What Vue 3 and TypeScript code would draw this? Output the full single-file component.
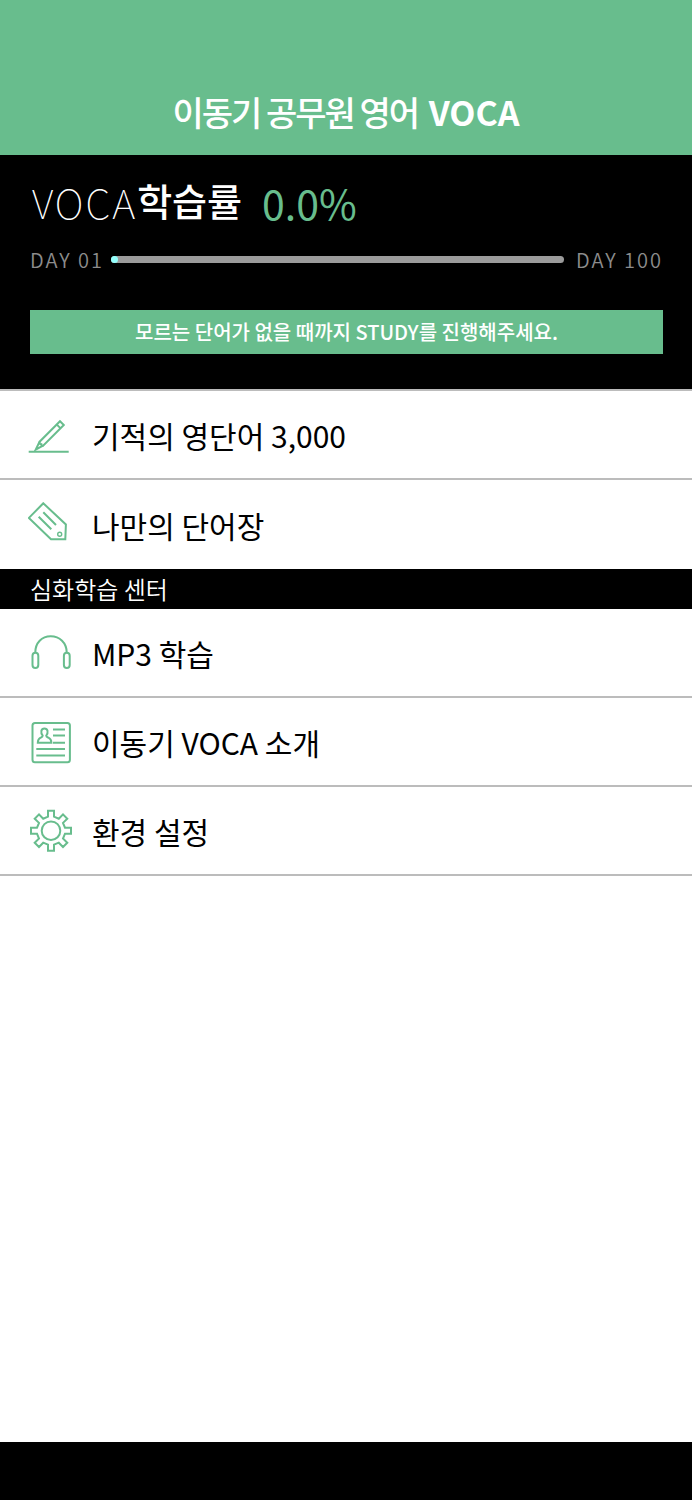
<script setup lang="ts">
import { computed, ref } from 'vue'

type IconName = 'pencil' | 'tag' | 'headphones' | 'profile' | 'gear'

interface MenuItem {
  label: string
  icon: IconName
  href: string
}

const studyMenu: MenuItem[] = [
  { label: '기적의 영단어 3,000', icon: 'pencil', href: '#words' },
  { label: '나만의 단어장', icon: 'tag', href: '#my-words' },
]

const centerMenu: MenuItem[] = [
  { label: 'MP3 학습', icon: 'headphones', href: '#mp3' },
  { label: '이동기 VOCA 소개', icon: 'profile', href: '#about' },
  { label: '환경 설정', icon: 'gear', href: '#settings' },
]

const groups = [
  { id: 'study', title: '', items: studyMenu },
  { id: 'center', title: '심화학습 센터', items: centerMenu },
]

const rate = ref(0)
const rateText = computed(() => `${rate.value.toFixed(1)}%`)

// Outline of an eight-toothed cog, one tooth per 45 degrees.
function cogPoints(cx: number, cy: number): string {
  const tooth = [[-3, -14], [-3, -20], [3, -20], [3, -14]]
  const points: string[] = []
  for (let i = 0; i < 8; i++) {
    const a = (i * Math.PI) / 4
    for (const [x, y] of tooth) {
      const px = cx + x * Math.cos(a) - y * Math.sin(a)
      const py = cy + x * Math.sin(a) + y * Math.cos(a)
      points.push(`${px.toFixed(1)},${py.toFixed(1)}`)
    }
  }
  return points.join(' ')
}
const cog = cogPoints(23, 22.7)
</script>

<template>
  <div class="page">
    <header class="header">
      <h1 class="title"><span class="title-ko">이동기 공무원 영어</span> <strong>VOCA</strong></h1>
    </header>

    <section class="status">
      <h2 class="rate">
        <span class="rate-en">VOCA</span><span class="rate-ko">학습률</span>
        <span class="rate-value">{{ rateText }}</span>
      </h2>
      <div class="days">
        <span>DAY 01</span>
        <div class="track" role="progressbar" aria-label="VOCA 학습률" aria-valuemin="0" aria-valuemax="100" :aria-valuenow="rate">
          <div class="fill" :style="{ width: rate + '%' }"></div>
        </div>
        <span>DAY 100</span>
      </div>
      <button type="button" class="notice">모르는 단어가 없을 때까지 STUDY를 진행해주세요.</button>
    </section>

    <nav class="menu">
      <section v-for="group in groups" :key="group.id" class="group">
        <h3 v-if="group.title" class="group-title">{{ group.title }}</h3>
        <ul class="list">
          <li v-for="item in group.items" :key="item.label" class="item">
            <a class="link" :href="item.href">
              <svg class="icon" viewBox="0 0 45 45" aria-hidden="true">
                <g v-if="item.icon === 'pencil'">
                  <path d="M0.7 39.8H40.7" />
                  <path d="M7.7 37.6L11.6 29.7L32 9.2L35.8 13L15.4 33.5Z" />
                  <path d="M28.6 12.4L32.6 16.4M11.6 29.7C11.4 31.6 11.9 32.3 13.2 32.2C13.1 33.4 13.8 34 15.4 33.5" />
                </g>
                <g v-else-if="item.icon === 'tag'">
                  <path d="M15.3 1.3L0.9 15.9L23 37.3H37.3L37.9 22.5Z" />
                  <path d="M15.3 10.3L28 23M10.7 14.7L23.3 27.3" />
                  <circle class="thin" cx="31.7" cy="32.3" r="2" />
                </g>
                <g v-else-if="item.icon === 'headphones'">
                  <path d="M7.3 22.5C7.3 12.8 13.8 6.3 22.7 6.3S38.7 12.8 38.7 22.5" />
                  <rect x="4.5" y="22.8" width="5.8" height="15.2" rx="2.9" />
                  <rect x="35.9" y="22.8" width="5.8" height="15.2" rx="2.9" />
                </g>
                <g v-else-if="item.icon === 'profile'">
                  <rect x="4.5" y="4" width="37.4" height="39.2" rx="2.5" />
                  <path d="M25 10.5H37M25 16.5H37M25 23.7H37M8.3 30H37M8.3 36.4H37" />
                  <path d="M14.7 16.6C13.2 15.2 13.1 13.4 13.4 11.8C13.8 10 15 9.4 16.4 9.4S19.1 10 19.5 11.8C19.8 13.4 19.6 15.2 18.2 16.6C18.2 18 19.2 18.2 20.4 18.7C22.3 19.5 23.3 21 23.4 23.7H9.8C9.9 21 10.8 19.5 12.6 18.7C13.8 18.2 14.7 18 14.7 16.6Z" />
                </g>
                <g v-else>
                  <polygon :points="cog" />
                  <circle cx="23" cy="22.7" r="9.3" />
                </g>
              </svg>
              <span>{{ item.label }}</span>
            </a>
          </li>
        </ul>
      </section>
    </nav>

    <footer class="footer"></footer>
  </div>
</template>

<style>
body {
  margin: 0;
  background: #fff;
}
</style>

<style scoped>
.page {
  display: flex;
  flex-direction: column;
  box-sizing: border-box;
  min-height: 100vh;
  padding-right: 1px;
  background: #fff;
  color: #000;
  font-family: "Noto Sans CJK KR", "Noto Sans", sans-serif;
}
.header {
  padding: 86px 16px 17px;
  background: #68bd8d;
  color: #fff;
  text-align: center;
}
.title {
  margin: 0;
  font-size: 34px;
  line-height: 52px;
  font-weight: 500;
}
.title-ko {
  margin-right: 3px;
  letter-spacing: -2px;
}
.title strong {
  font-weight: 700;
}
.status {
  padding: 20px 29px 35px 30px;
  background: #000;
}
.rate {
  display: flex;
  align-items: flex-start;
  margin: 0;
  padding-left: 2px;
  color: #fff;
  line-height: 54px;
}
.rate-en {
  font-size: 40px;
  font-weight: 100;
  letter-spacing: 2px;
}
.rate-ko {
  font-size: 38px;
  font-weight: 500;
  line-height: 50px;
}
.rate-value {
  margin-left: 20px;
  color: #68bd8d;
  font-size: 41px;
  font-weight: 400;
}
.days {
  display: flex;
  align-items: center;
  gap: 12px;
  margin-top: 14px;
  color: #8c8c8c;
  font-size: 20px;
  font-weight: 350;
  line-height: 33px;
  letter-spacing: 2px;
}
.days span:first-child {
  margin-right: -5px;
}
.track {
  flex: 1;
  height: 7px;
  border-radius: 4px;
  background: #9b9b9b;
}
.fill {
  min-width: 7px;
  height: 7px;
  border-radius: 4px;
  background: #93fffc;
}
.notice {
  display: block;
  width: 100%;
  margin-top: 34px;
  padding: 7px 0;
  border: 0;
  background: #68bd8d;
  color: #fff;
  font-family: inherit;
  font-size: 20px;
  font-weight: 500;
  line-height: 30px;
  text-align: center;
}
.menu {
  border-top: 2px solid #bcbcbc;
}
.group-title {
  margin: 0;
  padding: 0 30px;
  background: #000;
  color: #fff;
  font-size: 24px;
  font-weight: 350;
  line-height: 40px;
}
.list {
  margin: 0;
  padding: 0;
  list-style: none;
}
.item {
  box-sizing: border-box;
  height: 89px;
  border-bottom: 2px solid #bcbcbc;
}
.group:first-child .item:last-child {
  border-bottom: 0;
}
.link {
  display: flex;
  align-items: center;
  gap: 19px;
  height: 100%;
  padding: 0 28px;
  color: #000;
  font-size: 30px;
  font-weight: 400;
  line-height: 44px;
  text-decoration: none;
}
.icon {
  flex: none;
  width: 45px;
  height: 45px;
  fill: none;
  stroke: #68bd8d;
  stroke-width: 2;
}
.thin {
  stroke-width: 1.4;
}
.footer {
  height: 58px;
  margin-top: auto;
  background: #000;
}
</style>
